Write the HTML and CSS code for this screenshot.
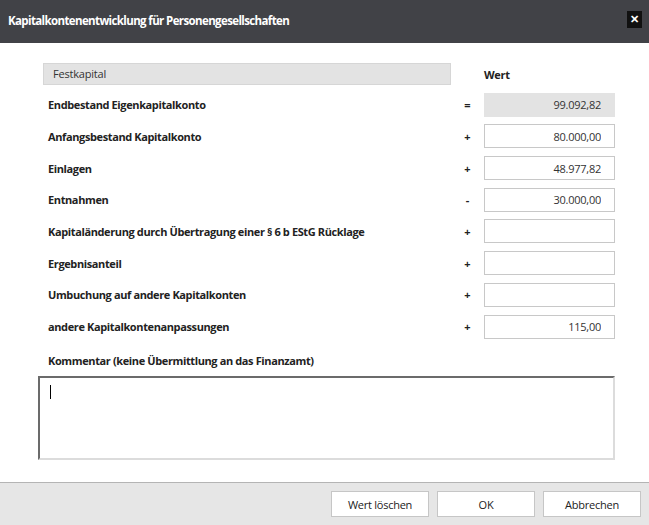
FILE: index.html
```
<!DOCTYPE html>
<html>
<head>
  <title>Kapitalkontenentwicklung</title>
  <link rel="stylesheet" href="styles.css">
</head>
<body>
  <div class="dialog">
    <div class="dialog-header">
      <span class="dialog-title">Kapitalkontenentwicklung für Personengesellschaften</span>
      <button class="close-btn">&#x2715;</button>
    </div>

    <div class="dialog-body">
      <div class="grid">
        <div class="section-bar">Festkapital</div>
        <div></div>
        <div class="col-head">Wert</div>

        <div class="label">Endbestand Eigenkapitalkonto</div>
        <div class="op">=</div>
        <input class="value readonly" type="text" value="99.092,82" readonly>

        <div class="label">Anfangsbestand Kapitalkonto</div>
        <div class="op">+</div>
        <input class="value" type="text" value="80.000,00">

        <div class="label">Einlagen</div>
        <div class="op">+</div>
        <input class="value" type="text" value="48.977,82">

        <div class="label">Entnahmen</div>
        <div class="op">-</div>
        <input class="value" type="text" value="30.000,00">

        <div class="label">Kapitaländerung durch Übertragung einer § 6 b EStG Rücklage</div>
        <div class="op">+</div>
        <input class="value" type="text" value="">

        <div class="label">Ergebnisanteil</div>
        <div class="op">+</div>
        <input class="value" type="text" value="">

        <div class="label">Umbuchung auf andere Kapitalkonten</div>
        <div class="op">+</div>
        <input class="value" type="text" value="">

        <div class="label">andere Kapitalkontenanpassungen</div>
        <div class="op">+</div>
        <input class="value" type="text" value="115,00">
      </div>

      <div class="comment-label">Kommentar (keine Übermittlung an das Finanzamt)</div>
      <div class="comment-box"><span class="caret"></span></div>
    </div>

    <div class="dialog-footer">
      <button class="btn">Wert löschen</button>
      <button class="btn">OK</button>
      <button class="btn">Abbrechen</button>
    </div>
  </div>
</body>
</html>
```
FILE: styles.css
```
body {
  margin: 0;
  font-family: "Open Sans", "Noto Sans", sans-serif;
  font-size: 11px;
  color: #222;
  background: #fff;
}

.dialog {
  width: 649px;
  height: 525px;
  display: flex;
  flex-direction: column;
}

.dialog-header {
  height: 43px;
  background-color: #414247;
  display: flex;
  align-items: center;
  justify-content: space-between;
  padding: 0 7px 0 8px;
  box-sizing: border-box;
}

.dialog-title {
  color: #fff;
  font-weight: bold;
  font-size: 11.5px;
  letter-spacing: -0.62px;
  margin-top: -3px;
}

.close-btn {
  width: 15px;
  height: 17px;
  padding: 0;
  border: none;
  background-color: #111;
  color: #fff;
  font-size: 11px;
  font-weight: bold;
  line-height: 17px;
  margin-top: -4px;
}

.dialog-body {
  flex: 1;
  padding: 20px 0 0 38px;
}

.grid {
  display: grid;
  grid-template-columns: 408px 33px 131px;
  grid-template-rows: 22px repeat(8, 24px);
  row-gap: 7.7px;
  margin-left: 5px;
  align-items: center;
}

.grid .section-bar {
  height: 22px;
}

.section-bar {
  background-color: #e3e3e3;
  border: 1px solid #d6d6d6;
  box-sizing: border-box;
  padding-left: 9px;
  line-height: 20px;
  color: #333;
  letter-spacing: -0.2px;
}

.col-head {
  font-weight: bold;
  letter-spacing: -0.3px;
}

.label {
  font-weight: bold;
  padding-left: 5px;
  letter-spacing: -0.38px;
}

.op {
  text-align: center;
  font-weight: bold;
}

.value {
  width: 131px;
  height: 24px;
  box-sizing: border-box;
  border: 1px solid #c8c8c8;
  background: #fff;
  text-align: right;
  padding: 0 13px 0 4px;
  font-family: "Open Sans", "Noto Sans", sans-serif;
  font-size: 11px;
  letter-spacing: -0.25px;
  color: #333;
  outline: none;
}

.value.readonly {
  background-color: #e3e3e3;
  border-color: #e3e3e3;
}

.comment-label {
  font-weight: bold;
  margin: 14px 0 0 10px;
  height: 23px;
  letter-spacing: -0.38px;
}

.comment-box {
  width: 577px;
  height: 84px;
  box-sizing: border-box;
  border-style: solid;
  border-width: 2px;
  border-color: #6b6b6b #dcdcdc #dcdcdc #6b6b6b;
  padding: 7px 10px;
}

.caret {
  display: block;
  width: 1px;
  height: 14px;
  background: #000;
}

.dialog-footer {
  height: 43px;
  background-color: #e6e6e6;
  border-top: 1px solid #b4b4b4;
  box-sizing: border-box;
  display: flex;
  justify-content: flex-end;
  align-items: center;
  gap: 8px;
  padding-right: 8px;
}

.btn {
  width: 98px;
  height: 26px;
  background: #fff;
  border: 1px solid #c6c6c6;
  font-family: "Open Sans", "Noto Sans", sans-serif;
  font-size: 11px;
  letter-spacing: -0.25px;
  color: #222;
}
```
